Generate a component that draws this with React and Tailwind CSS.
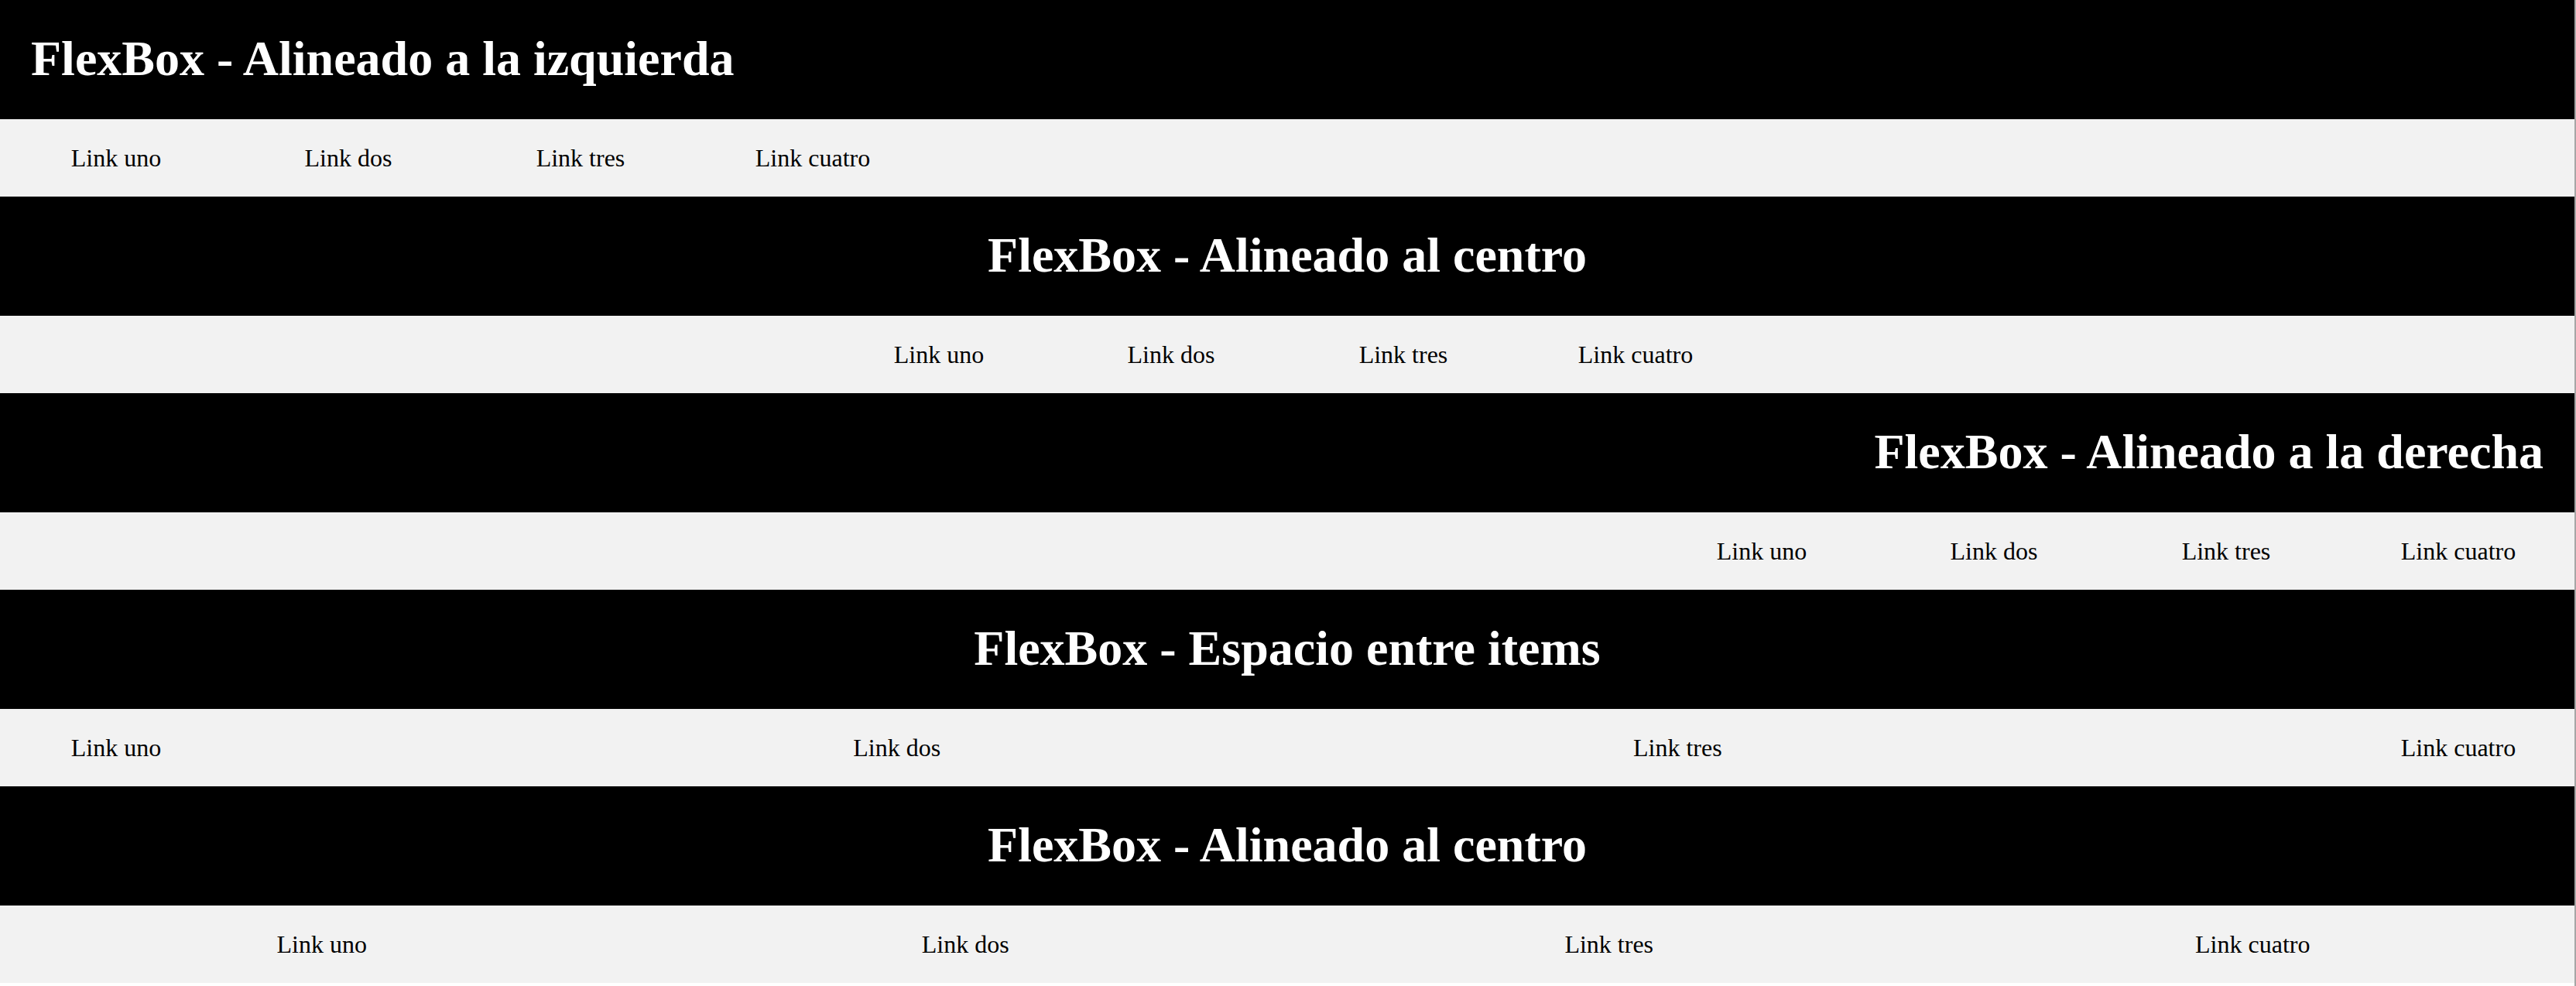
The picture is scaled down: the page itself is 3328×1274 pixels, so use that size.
import React from 'react';

const links = ['Link uno', 'Link dos', 'Link tres', 'Link cuatro'];

const sections = [
  { title: 'FlexBox - Alineado a la izquierda', head: 'text-left', nav: 'justify-start' },
  { title: 'FlexBox - Alineado al centro', head: 'text-center', nav: 'justify-center' },
  { title: 'FlexBox - Alineado a la derecha', head: 'text-right', nav: 'justify-end' },
  { title: 'FlexBox - Espacio entre items', head: 'text-center', nav: 'justify-between' },
  { title: 'FlexBox - Alineado al centro', head: 'text-center', nav: 'justify-around' },
];

const Section = ({ title, head, nav }) => (
  <section>
    {/* Header bar */}
    <header className="bg-black px-[40px] pt-[39px] pb-[41px]">
      <h1 className={`text-white text-[64px] leading-[74px] font-bold ${head}`}>{title}</h1>
    </header>

    {/* Link row */}
    <nav className={`flex bg-[#f2f2f2] py-[32px] ${nav}`}>
      {links.map((l) => (
        <a key={l} href="#" className="block w-[300px] shrink-0 text-center text-black text-[32px] leading-[36px]">
          {l}
        </a>
      ))}
    </nav>
  </section>
);

export default function App() {
  return (
    <div className="flex min-h-[1274px] bg-white" style={{ fontFamily: '"Liberation Serif", "Times New Roman", serif' }}>
      <main className="flex-1">
        {sections.map((s, i) => (
          <Section key={i} {...s} />
        ))}
      </main>
      <div className="w-[2px] bg-[#a6a6a6]" />
    </div>
  );
}
